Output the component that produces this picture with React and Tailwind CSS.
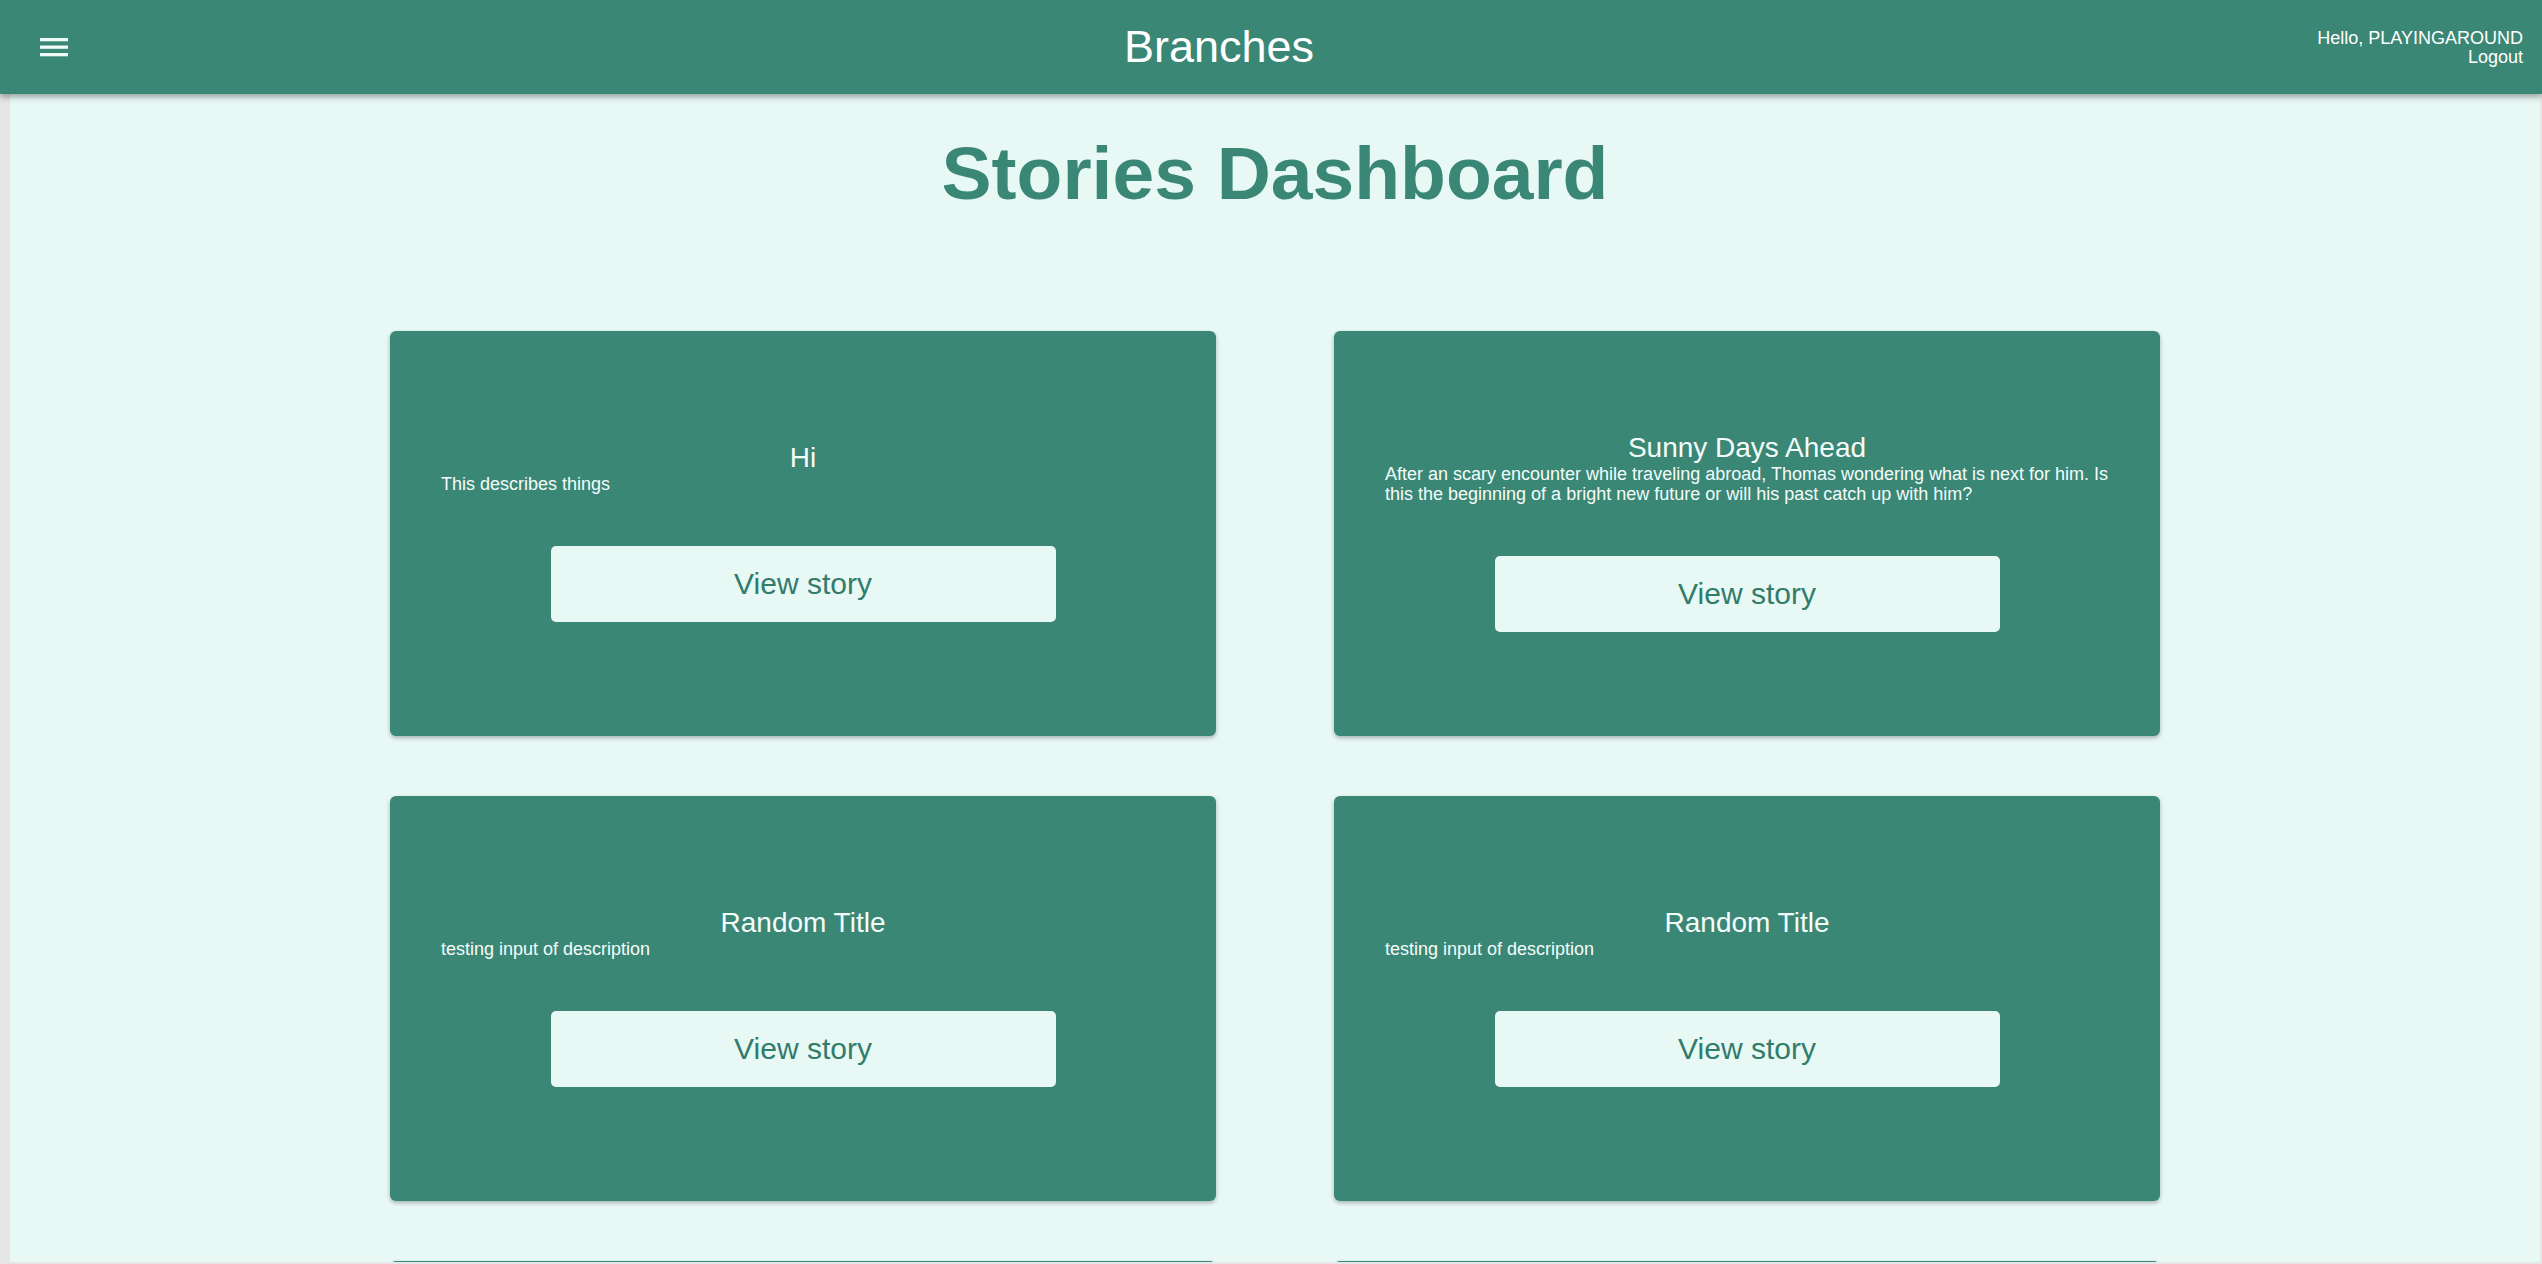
const stories = [
  { title: "Hi", description: "This describes things" },
  {
    title: "Sunny Days Ahead",
    description:
      "After an scary encounter while traveling abroad, Thomas wondering what is next for him. Is this the beginning of a bright new future or will his past catch up with him?",
  },
  { title: "Random Title", description: "testing input of description" },
  { title: "Random Title", description: "testing input of description" },
  { title: "Random Title", description: "testing input of description" },
  { title: "Random Title", description: "testing input of description" },
];

function MenuIcon() {
  return (
    <svg width="28" height="19" viewBox="0 0 28 19" className="block shrink-0">
      <rect x="0" y="0" width="28" height="3.3" fill="#eefaf6" />
      <rect x="0" y="7.5" width="28" height="3.3" fill="#eefaf6" />
      <rect x="0" y="15" width="28" height="3.3" fill="#eefaf6" />
    </svg>
  );
}

function StoryCard({ story }) {
  return (
    <div className="h-[405px] bg-[#3a8776] rounded-[6px] shadow-[0_2px_4px_rgba(0,0,0,0.28)] flex flex-col items-center justify-center pb-[4px]">
      <h2 className="w-full text-center text-[28px] leading-[33px] text-[#f4fcfa]">
        {story.title}
      </h2>
      <p className="w-full px-[51px] text-[18px] leading-[20px] text-[#f4fcfa]">
        {story.description}
      </p>
      <button className="mt-[52px] w-[505px] h-[76px] shrink-0 bg-[#e8f9f5] rounded-[5px] text-[30px] leading-[34px] text-[#327c6b]">
        View story
      </button>
    </div>
  );
}

export default function App() {
  return (
    <div
      className="h-[1264px] overflow-hidden bg-[#e6e6e6] flex flex-col"
      style={{ fontFamily: '"Liberation Sans", Arial, sans-serif' }}
    >
      {/* Top bar */}
      <header className="relative z-10 h-[94px] shrink-0 bg-[#3a8776] shadow-[0_3px_6px_rgba(0,0,0,0.35)] flex items-center pl-[40px] pr-[19px]">
        <MenuIcon />
        <div className="ml-[1056px] text-[45px] leading-[52px] text-white">
          Branches
        </div>
        <div className="ml-auto text-right text-[18px] leading-[19px] text-white mt-[2px]">
          <div>Hello, PLAYINGAROUND</div>
          <div>Logout</div>
        </div>
      </header>

      {/* Dashboard */}
      <main className="flex-1 ml-[10px] mr-[2px] mb-[2px] bg-[#e8f9f5] overflow-hidden pt-[36px]">
        <h1 className="text-center text-[75px] leading-[87px] font-bold text-[#3a8776]">
          Stories Dashboard
        </h1>
        <div className="mt-[114px] grid grid-cols-[826px_826px] justify-center gap-x-[118px] gap-y-[60px]">
          {stories.map((story, i) => (
            <StoryCard key={i} story={story} />
          ))}
        </div>
      </main>
    </div>
  );
}
